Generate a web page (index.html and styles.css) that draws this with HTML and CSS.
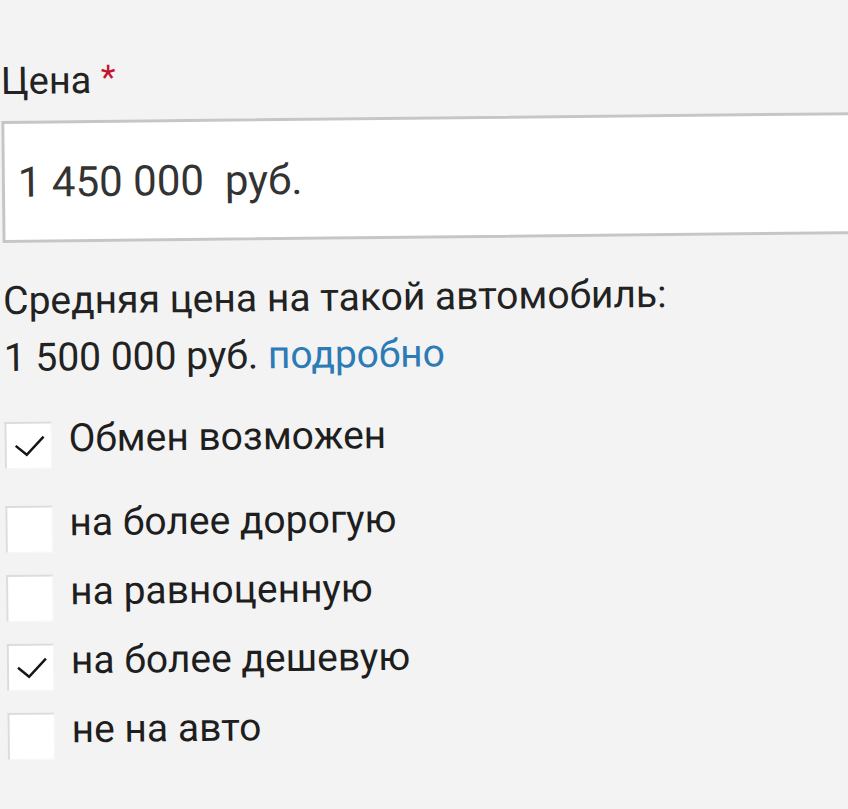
FILE: index.html
```html
<!DOCTYPE html>
<html>
<head>
    <meta charset="utf-8">
    <title>Цена</title>
    <link rel="stylesheet" href="styles.css">
</head>
<body>
    <main class="price-form">
        <label class="field-label" for="price">Цена <span class="required">*</span></label>
        <div class="price-input">
            <span id="price">1 450 000&nbsp; руб.</span>
        </div>
        <p class="hint">
            Средняя цена на такой автомобиль:<br>
            1 500 000 руб. <a href="#">подробно</a>
        </p>
        <ul class="options">
            <li class="option option-main">
                <span class="box checked">
                    <svg viewBox="0 0 47 47" width="47" height="47"><path d="M11 24 L22 33 L39 15" fill="none" stroke="#151515" stroke-width="2.5"/></svg>
                </span>
                <span class="option-text">Обмен возможен</span>
            </li>
            <li class="option">
                <span class="box"></span>
                <span class="option-text">на более дорогую</span>
            </li>
            <li class="option">
                <span class="box"></span>
                <span class="option-text">на равноценную</span>
            </li>
            <li class="option">
                <span class="box checked">
                    <svg viewBox="0 0 47 47" width="47" height="47"><path d="M11 24 L22 33 L39 15" fill="none" stroke="#151515" stroke-width="2.5"/></svg>
                </span>
                <span class="option-text">на более дешевую</span>
            </li>
            <li class="option">
                <span class="box"></span>
                <span class="option-text">не на авто</span>
            </li>
        </ul>
    </main>
</body>
</html>
```

FILE: styles.css
```css
* {
    box-sizing: border-box;
    padding: 0;
    margin: 0;
}

html,
body {
    height: 100%;
    overflow: hidden;
}

body {
    background-color: #f3f3f3;
    font-family: Roboto, "Noto Sans", sans-serif;
    color: #222;
}

.price-form {
    width: 870px;
    padding-top: 56px;
    transform: rotate(-0.6deg);
    transform-origin: 0 0;
    display: flex;
    flex-direction: column;
}

.field-label {
    font-size: 38px;
    line-height: 44px;
    color: #222;
}

.required {
    color: #c41230;
    font-size: 34px;
    vertical-align: 4px;
}

.price-input {
    margin-top: 18px;
    height: 122px;
    background-color: #fff;
    border: 3px solid #c6c6c6;
    display: flex;
    align-items: center;
    padding-left: 13px;
    font-size: 42px;
    color: #333;
}

.hint {
    margin-top: 30px;
    font-size: 39px;
    line-height: 57px;
    color: #222;

    & a {
        color: #2c7bb6;
        text-decoration: none;
    }
}

.options {
    list-style: none;
    margin-top: 35px;
    display: flex;
    flex-direction: column;
    gap: 22px;
}

.option {
    display: flex;
    align-items: flex-start;
    gap: 17px;
}

.option-main {
    margin-bottom: 15px;
}

.box {
    width: 47px;
    height: 47px;
    flex: none;
    background-color: #fff;
    border-style: solid;
    border-width: 2px 1px 1px 2px;
    border-color: #dcdcdc #f6f6f6 #f6f6f6 #dcdcdc;
    position: relative;

    & svg {
        position: absolute;
        left: -2px;
        top: -2px;
    }
}

.option-text {
    font-size: 39px;
    line-height: 34px;
    color: #1e1e1e;
}
```
